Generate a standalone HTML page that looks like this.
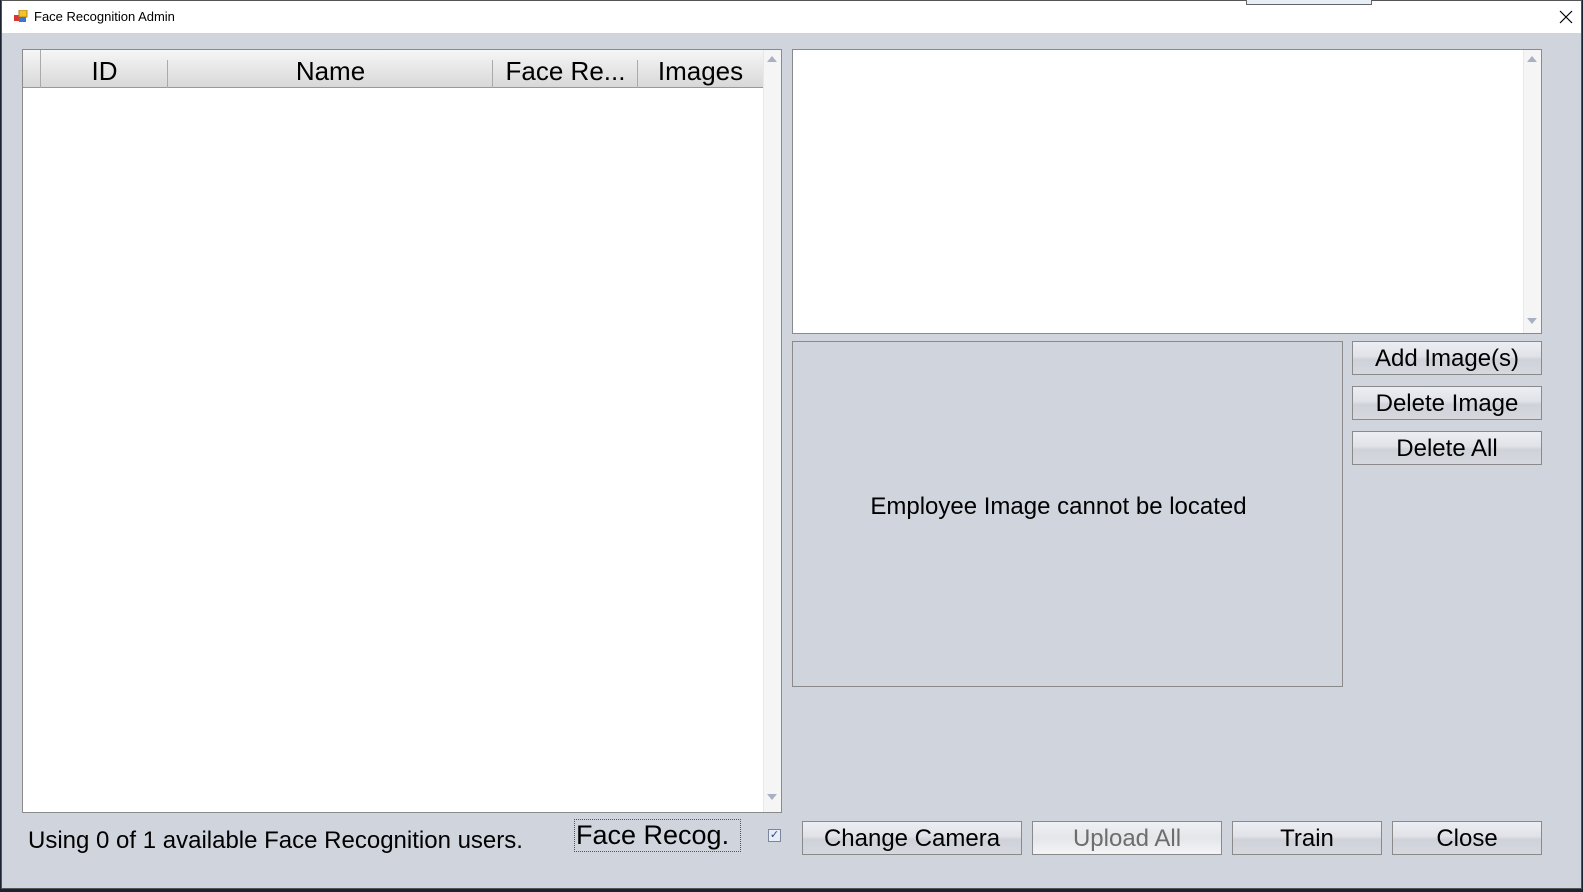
<!DOCTYPE html>
<html><head><style>
*{box-sizing:border-box;margin:0;padding:0}
body{width:1583px;height:892px;background:#1b2230;position:relative;overflow:hidden;font-family:"Liberation Sans",Arial,sans-serif;color:#000}
.win{position:absolute;left:1px;top:0;width:1581px;height:889px;background:#d0d4dd;border:1px solid #555}
.title{position:absolute;left:0;top:0;width:100%;height:32px;background:#fff}
.title span{position:absolute;left:32px;top:8px;font-size:13px}
.a{position:absolute}
.box{position:absolute;background:#fff;border:1px solid #8a8a8a}
.hdr{position:absolute;top:0;height:38px;background:linear-gradient(#f6f6f6,#e4e4e4 60%,#d8d8d8);border-bottom:1px solid #999;font-size:26px;text-align:center;line-height:42px;white-space:nowrap}
.sep{position:absolute;top:10px;width:1px;height:28px;background:#aaa}
.sb{position:absolute;background:#f5f5f5;border-left:1px solid #e8e8e8}
.btn{position:absolute;border:1px solid #8a8a8a;background:linear-gradient(#eceef3,#e0e2e8 45%,#cfd2d9 55%,#d6d8de);font-size:24px;text-align:center;line-height:34px;white-space:nowrap}
.up{border-style:solid;border-color:transparent;width:0;height:0;position:absolute}
</style></head><body>
<div class="win">
 <div class="title">
  <svg class="a" style="left:12px;top:9px" width="14" height="14"><rect x="0" y="5" width="5" height="6" fill="#d33"/><rect x="5" y="0" width="8" height="7" fill="#f3c12c" stroke="#b08a10"/><rect x="5" y="7" width="7" height="5" fill="#3a78d0"/></svg>
  <span>Face Recognition Admin</span>
  <svg class="a" style="left:1557px;top:9px" width="14" height="14"><path d="M1 1L13 13M13 1L1 13" stroke="#000" stroke-width="1.2"/></svg>
 </div>
</div>
<div class="a" style="left:1246px;top:0;width:126px;height:5px;border:1px solid #666;border-top:0;background:#e8eef6"></div>

<div class="box" style="left:22px;top:49px;width:760px;height:764px">
 <div class="hdr" style="left:0;width:740px"></div>
 <div class="hdr" style="left:18px;width:127px">ID</div>
 <div class="hdr" style="left:145px;width:325px">Name</div>
 <div class="hdr" style="left:470px;width:145px">Face Re...</div>
 <div class="hdr" style="left:615px;width:125px">Images</div>
 <div class="sep" style="left:17px;top:0;height:38px"></div>
 <div class="sep" style="left:144px"></div>
 <div class="sep" style="left:469px"></div>
 <div class="sep" style="left:614px"></div>
 <div class="sb" style="left:740px;top:0;width:18px;height:762px"></div>
 <div class="up" style="left:744px;top:6px;border-width:0 5px 6px 5px;border-bottom-color:#a9b0c4"></div>
 <div class="up" style="left:744px;top:744px;border-width:6px 5px 0 5px;border-top-color:#a9b0c4"></div>
</div>

<div class="box" style="left:792px;top:49px;width:750px;height:285px">
 <div class="sb" style="left:730px;top:0;width:18px;height:283px"></div>
 <div class="up" style="left:734px;top:6px;border-width:0 5px 6px 5px;border-bottom-color:#a9b0c4"></div>
 <div class="up" style="left:734px;top:268px;border-width:6px 5px 0 5px;border-top-color:#a9b0c4"></div>
</div>

<div class="a" style="left:792px;top:341px;width:551px;height:346px;border:1px solid #8a8a8a;background:#d0d4dd;font-size:24px;text-align:center;line-height:330px;padding-right:18px">Employee Image cannot be located</div>

<div class="btn" style="left:1352px;top:341px;width:190px;height:34px">Add Image(s)</div>
<div class="btn" style="left:1352px;top:386px;width:190px;height:34px">Delete Image</div>
<div class="btn" style="left:1352px;top:431px;width:190px;height:34px">Delete All</div>

<div class="a" style="left:28px;top:827px;font-size:24px">Using 0 of 1 available Face Recognition users.</div>
<div class="a" style="left:574px;top:819px;width:167px;height:33px;border:1px dotted #555;font-size:27px;line-height:30px;padding-left:1px;white-space:nowrap">Face Recog.</div>
<div class="a" style="left:768px;top:829px;width:13px;height:13px;border:1px solid #7a86a0;background:#e8ecf4;font-size:11px;line-height:11px;text-align:center;color:#2a4a8a">✓</div>

<div class="btn" style="left:802px;top:821px;width:220px;height:34px">Change Camera</div>
<div class="btn" style="left:1032px;top:821px;width:190px;height:34px;color:#6d6d6d;background:linear-gradient(#eef0f4,#e4e6ea 50%,#f3f4f6)">Upload All</div>
<div class="btn" style="left:1232px;top:821px;width:150px;height:34px">Train</div>
<div class="btn" style="left:1392px;top:821px;width:150px;height:34px">Close</div>
</body></html>
